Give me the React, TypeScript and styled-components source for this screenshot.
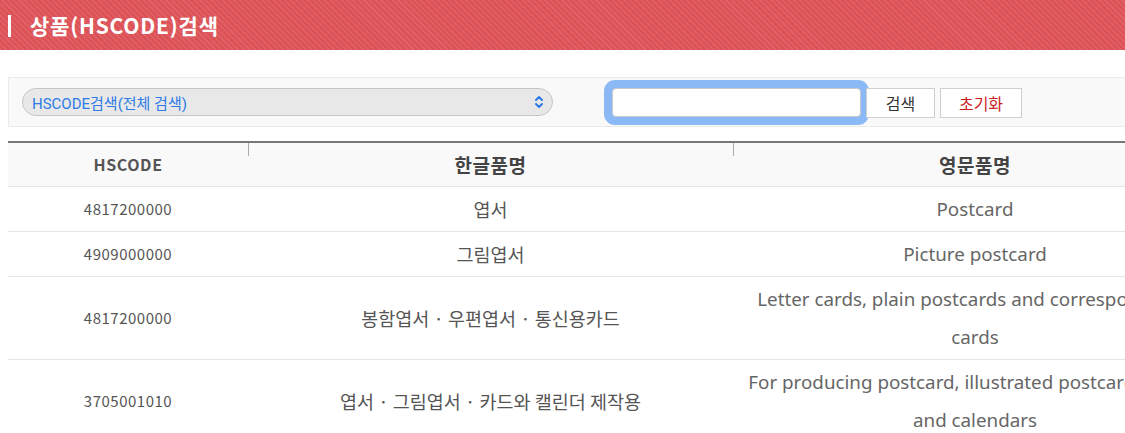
import React from "react";
import styled, { createGlobalStyle } from "styled-components";

const Global = createGlobalStyle`
  html, body { margin: 0; padding: 0; background: #fff; overflow: hidden; }
  body { font-family: "Noto Sans", "Noto Sans CJK KR", sans-serif; width: 1125px; }
  * { box-sizing: border-box; }
`;

const Page = styled.div`
  width: 1240px;
`;

const TitleBar = styled.header`
  height: 50px;
  display: flex;
  align-items: center;
  gap: 19px;
  padding-left: 8px;
  background-color: #dc5257;
  background-image: repeating-linear-gradient(
    45deg,
    rgba(255, 255, 255, 0.09) 0px,
    rgba(255, 255, 255, 0.09) 1.5px,
    rgba(255, 255, 255, 0) 1.5px,
    rgba(255, 255, 255, 0) 4px
  );
`;

const TitleMark = styled.span`
  width: 3px;
  height: 22px;
  background: #fff;
  margin-top: 1px;
`;

const Title = styled.h1`
  margin: 0;
  color: #fff;
  font-family: "Noto Sans CJK KR", sans-serif;
  font-weight: 700;
  font-size: 21px;
  letter-spacing: 0.8px;
  line-height: 1;
`;

const Content = styled.main`
  margin: 27px 0 0 8px;
  width: 1209px;
`;

const SearchBox = styled.section`
  height: 50px;
  display: flex;
  align-items: center;
  padding: 0 13px;
  background: #f9f9f9;
  border: 1px solid #ebebeb;
`;

const SelectBox = styled.div`
  width: 531px;
  height: 28px;
  display: flex;
  align-items: center;
  justify-content: space-between;
  padding: 0 7px 0 9px;
  border: 1px solid #c6c6c6;
  border-radius: 14px;
  background: #e8e8e8;
  color: #2d7be6;
  font-family: "Roboto", "Noto Sans CJK KR", sans-serif;
  font-size: 15px;
`;

const Input = styled.div`
  width: 249px;
  height: 29px;
  margin-left: 59px;
  border: 1px solid #c9c9c9;
  border-radius: 4px;
  background: #fff;
  box-shadow: 0 0 0 8px #8ab9f5;
`;

const Buttons = styled.div`
  display: flex;
  gap: 5px;
  margin-left: 5px;
  position: relative;
`;

const Button = styled.button<{ $danger?: boolean; $w: number }>`
  width: ${(p) => p.$w}px;
  height: 30px;
  border: 1px solid #cfcfcf;
  background: #fff;
  color: ${(p) => (p.$danger ? "#cc1f1f" : "#333")};
  font-family: "Noto Sans CJK KR", sans-serif;
  font-size: 16px;
  padding: 0;
  margin-top: 1px;
`;

const Table = styled.table`
  margin-top: 14px;
  width: 1209px;
  border-collapse: collapse;
  table-layout: fixed;
  border-top: 2px solid #777;
`;

const Th = styled.th<{ $small?: boolean; $divider?: boolean }>`
  position: relative;
  height: 44px;
  padding: 0;
  background: #f9f9f9;
  border-bottom: 1px solid #e3e3e3;
  color: ${(p) => (p.$small ? "#555" : "#444")};
  font-family: "Noto Sans CJK KR", sans-serif;
  font-weight: 700;
  font-size: ${(p) => (p.$small ? "16px" : "19px")};
  letter-spacing: ${(p) => (p.$small ? "0.6px" : "0.5px")};
  &::before {
    content: "";
    display: ${(p) => (p.$divider ? "block" : "none")};
    position: absolute;
    left: 0;
    top: 0;
    width: 1px;
    height: 13px;
    background: #aaa;
  }
`;

const Td = styled.td<{ $kind: "code" | "ko" | "en" }>`
  padding: 3px 10px;
  border-bottom: 1px solid #e5e5e5;
  text-align: center;
  line-height: 38px;
  color: ${(p) => (p.$kind === "en" ? "#666" : "#555")};
  font-family: ${(p) =>
    p.$kind === "en"
      ? `"Noto Sans", "Open Sans", sans-serif`
      : `"Noto Sans CJK KR", sans-serif`};
  font-size: ${(p) => (p.$kind === "code" ? "15px" : p.$kind === "ko" ? "18.5px" : "18.8px")};
  letter-spacing: ${(p) => (p.$kind === "code" ? "0.5px" : "0")};
`;

const rows = [
  { code: "4817200000", ko: "엽서", en: "Postcard" },
  { code: "4909000000", ko: "그림엽서", en: "Picture postcard" },
  {
    code: "4817200000",
    ko: "봉함엽서 · 우편엽서 · 통신용카드",
    en: "Letter cards, plain postcards and correspondence cards",
  },
  {
    code: "3705001010",
    ko: "엽서 · 그림엽서 · 카드와 캘린더 제작용",
    en: "For producing postcard, illustrated postcards, cards and calendars",
  },
];

const Chevrons = () => (
  <svg width="12" height="14" viewBox="0 0 12 14" fill="none" stroke="#2d7be6" strokeWidth="2" strokeLinecap="round" strokeLinejoin="round">
    <path d="M3 5 L6 2 L9 5" />
    <path d="M3 9 L6 12 L9 9" />
  </svg>
);

export default function App() {
  return (
    <Page>
      <Global />
      <TitleBar>
        <TitleMark />
        <Title>상품(HSCODE)검색</Title>
      </TitleBar>
      <Content>
        <SearchBox>
          <SelectBox>
            <span>HSCODE검색(전체 검색)</span>
            <Chevrons />
          </SelectBox>
          <Input />
          <Buttons>
            <Button $w={69}>검색</Button>
            <Button $w={82} $danger>
              초기화
            </Button>
          </Buttons>
        </SearchBox>
        <Table>
          <colgroup>
            <col style={{ width: 240 }} />
            <col style={{ width: 485 }} />
            <col style={{ width: 484 }} />
          </colgroup>
          <thead>
            <tr>
              <Th $small>HSCODE</Th>
              <Th $divider>한글품명</Th>
              <Th $divider>영문품명</Th>
            </tr>
          </thead>
          <tbody>
            {rows.map((r, i) => (
              <tr key={i}>
                <Td $kind="code">{r.code}</Td>
                <Td $kind="ko">{r.ko}</Td>
                <Td $kind="en">{r.en}</Td>
              </tr>
            ))}
          </tbody>
        </Table>
      </Content>
    </Page>
  );
}
